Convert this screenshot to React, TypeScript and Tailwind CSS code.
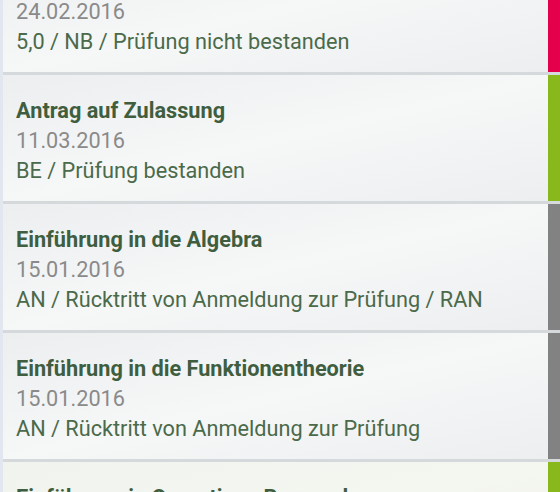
import React from "react";

type Exam = {
  title: string;
  date: string;
  status: string;
  bar: string;
  tint?: boolean;
};

const exams: Exam[] = [
  { title: "Einführung in die Zahlentheorie", date: "24.02.2016", status: "5,0 / NB / Prüfung nicht bestanden", bar: "bg-[#e4004b]" },
  { title: "Antrag auf Zulassung", date: "11.03.2016", status: "BE / Prüfung bestanden", bar: "bg-[#88b81b]" },
  { title: "Einführung in die Algebra", date: "15.01.2016", status: "AN / Rücktritt von Anmeldung zur Prüfung / RAN", bar: "bg-[#828282]" },
  { title: "Einführung in die Funktionentheorie", date: "15.01.2016", status: "AN / Rücktritt von Anmeldung zur Prüfung", bar: "bg-[#828282]" },
  { title: "Einführung in Operations Research", date: "18.02.2016", status: "2,3 / BE / Prüfung bestanden", bar: "bg-[#88b81b]", tint: true },
];

function ExamCard({ exam }: { exam: Exam }) {
  return (
    <div
      className={
        exam.tint
          ? "flex h-[126px] shrink-0 bg-gradient-to-br from-[#f1f3ef] via-[#f4f6f0] to-[#eef3e6]"
          : "flex h-[126px] shrink-0 bg-gradient-to-br from-[#eceef0] via-[#f6f7f7] to-[#eceef0]"
      }
    >
      <div className="flex-1 pl-[13px] pt-[21px] text-[21.7px] leading-[30px]">
        <p className="font-bold text-[#3f5e3f]">{exam.title}</p>
        <p className="text-[#8a8a8a]">{exam.date}</p>
        <p className="text-[#4a6a4a]">{exam.status}</p>
      </div>
      <div className={`w-[12px] ${exam.bar}`} />
    </div>
  );
}

export default function App() {
  return (
    <main
      className="h-[492px] w-[560px] overflow-hidden border-l-[3px] border-[#e2e6ee] bg-[#d6d9dc]"
      style={{ fontFamily: "Roboto, 'Noto Sans', sans-serif" }}
    >
      <div className="-mt-[54px] flex flex-col gap-[3px]">
        {exams.map((exam) => (
          <ExamCard key={exam.title} exam={exam} />
        ))}
      </div>
    </main>
  );
}
